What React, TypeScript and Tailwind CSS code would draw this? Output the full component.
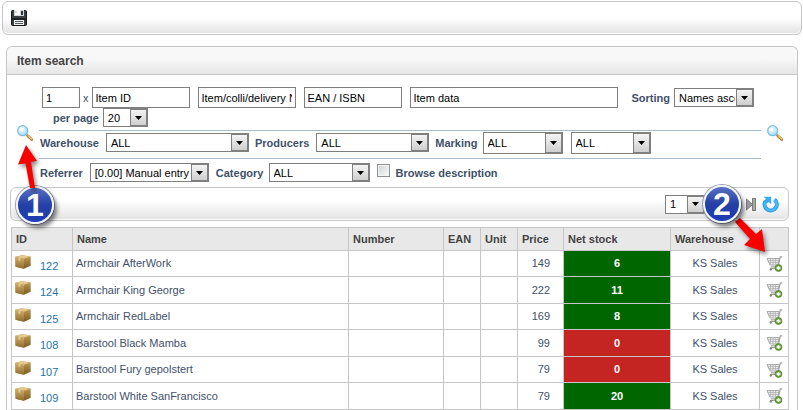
import { useId, type ReactNode } from "react";

const BORDER = "border-[#c6c6c6]";

function Select({ value, label, width, height = "h-[19px]" }: { value: string; label: string; width: string; height?: string }) {
  return (
    <span className={`relative inline-flex shrink-0 ${width} ${height}`}>
      <select
        aria-label={label}
        defaultValue={value}
        className="h-full w-full appearance-none rounded-none border border-[#7f7f7f] bg-white pr-[18px] pl-1 text-[11px] leading-4 text-black outline-none"
      >
        <option>{value}</option>
      </select>
      <span className="pointer-events-none absolute inset-y-0 right-0 flex w-[18px] items-center justify-center border-2 border-l border-[#808080] bg-linear-to-b from-[#f4f4f4] to-[#cfcfcf]">
        <svg width="7" height="4" viewBox="0 0 7 4" aria-hidden="true">
          <path d="M0 0h7L3.500 4z" fill="#000" />
        </svg>
      </span>
    </span>
  );
}

function TextBox({ value, label, width }: { value: string; label: string; width: string }) {
  return (
    <input
      type="text"
      aria-label={label}
      defaultValue={value}
      className={`h-[21px] shrink-0 border border-[#7f7f7f] bg-white px-[3px] text-[11px] leading-4 text-black outline-none ${width}`}
    />
  );
}

function Field({ label, gap = "gap-1", children }: { label: string; gap?: string; children: ReactNode }) {
  return (
    <div className={`flex items-center whitespace-nowrap ${gap}`}>
      <span className="font-bold">{label}</span>
      {children}
    </div>
  );
}

function SaveIcon() {
  return (
    <svg width="16" height="16" viewBox="0 0 16 16" aria-hidden="true">
      <path d="M.5 1.500a1 1 0 0 1 1-1h13a1 1 0 0 1 1 1v13a1 1 0 0 1-1 1h-13a1 1 0 0 1-1-1z" fill="#3a3f42" stroke="#17191b" />
      <rect x="3" y="0" width="10" height="6" fill="#d2d5d6" />
      <rect x="4" y="0" width="5" height="5" fill="#fafafa" />
      <path d="M5 1v2" stroke="#aaa" />
      <rect x="10" y="1" width="2" height="4" fill="#30363a" />
      <rect x="1" y="8" width="14" height="2" fill="#1d2022" />
      <rect x="3" y="10" width="10" height="5" fill="#f0f1f1" />
      <path d="M4 11.500h8M4 13.500h8" stroke="#55595c" />
    </svg>
  );
}

function SearchIcon() {
  const id = useId();
  return (
    <svg width="16" height="16" viewBox="0 0 16 16" aria-hidden="true">
      <defs>
        <radialGradient id={id} cx="40%" cy="35%" r="65%">
          <stop offset="0" stopColor="#fff" />
          <stop offset="1" stopColor="#9fdcf8" />
        </radialGradient>
      </defs>
      <path d="M9.500 9.500l1.500 1.500" stroke="#8b969e" strokeWidth="2" />
      <path d="M11 11l3.700 3.500" stroke="#b07a2e" strokeWidth="2.800" strokeLinecap="round" />
      <path d="M11.300 10.800l3.300 3.200" stroke="#eec07c" strokeWidth="1.400" strokeLinecap="round" />
      <circle cx="5.700" cy="5.700" r="5" fill={`url(#${id})`} stroke="#7dbbe0" strokeWidth="1.200" />
      <path d="M3 6a3 3 0 0 1 3-3" stroke="#fff" strokeWidth="1.200" fill="none" />
    </svg>
  );
}

function BoxIcon() {
  const id = useId();
  return (
    <svg width="16" height="14" viewBox="0 0 16 14" aria-hidden="true">
      <defs>
        <linearGradient id={`${id}l`} x1="0" y1="0" x2="0" y2="1">
          <stop offset="0" stopColor="#d3b16b" />
          <stop offset="1" stopColor="#8f6c2c" />
        </linearGradient>
        <linearGradient id={`${id}r`} x1="0" y1="0" x2="0" y2="1">
          <stop offset="0" stopColor="#c39e58" />
          <stop offset="1" stopColor="#7a5a20" />
        </linearGradient>
      </defs>
      <path d="M.3 1.800L7 .2l8.700 1.200v9.400L9 13.800.6 11.800z" fill={`url(#${id}r)`} />
      <path d="M.3 1.800L9 3.800v10L.6 11.800z" fill={`url(#${id}l)`} />
      <path d="M.3 1.800L7 .2l8.700 1.200L9 3.800z" fill="#dfc283" />
      <path d="M3.500 2.600L10 .7l1.800.3-6.400 2z" fill="#e9d3a0" />
      <path d="M3.500 2.600l1.900.4v2.800l-1.900-.4z" fill="#e2ca92" />
    </svg>
  );
}

function CartIcon() {
  return (
    <svg width="17" height="16" viewBox="0 0 17 16" aria-hidden="true">
      <path d="M1 2.500h12.200l-1.400 6.500H4z" fill="#e9e9e9" stroke="#ababab" />
      <path d="M1.500 4.500h11M2.500 6.500h9.500M4.500 3v5.500M7 3v5.500M9.500 3v5.500" stroke="#b4b4b4" strokeWidth=".8" />
      <path d="M16.300.8h-2l-2.300 10H4.800M4 12.500h7" stroke="#a0a0a0" strokeWidth="1.200" fill="none" />
      <circle cx="4.800" cy="13.500" r="1.200" fill="#888" />
      <circle cx="12.500" cy="12" r="3.400" fill="#6aa83a" stroke="#4b8322" strokeWidth=".8" />
      <path d="M12.500 10v4M10.500 12h4" stroke="#fff" strokeWidth="1.500" />
    </svg>
  );
}

function LastPageIcon() {
  return (
    <svg width="10" height="13" viewBox="0 0 10 13" aria-hidden="true">
      <path d="M.5 1l6 5.500-6 5.500z" fill="#9a9a9a" stroke="#7b7b7b" />
      <rect x="6.500" y=".5" width="3" height="12" fill="#a8a8a8" stroke="#7b7b7b" />
    </svg>
  );
}

function ReloadIcon() {
  return (
    <svg width="17" height="17" viewBox="0 0 17 17" aria-hidden="true">
      <path d="M12.500 3.600A6.100 6.100 0 1 1 3.600 5" fill="none" stroke="#1d8fe0" strokeWidth="4" />
      <path d="M12.500 3.800A6 6 0 1 1 3.800 5.200" fill="none" stroke="#43b8fa" strokeWidth="2.600" />
      <path d="M1.800.8h7.400v7.400L6.800 6 4.500 7.500 2 5l1.800-2z" fill="#37abf3" />
    </svg>
  );
}

function Badge({ value }: { value: string }) {
  return (
    <span className="flex size-[38px] items-center justify-center rounded-full border-2 border-[#f1f3f8] bg-linear-to-b from-[#5870c4] via-[#2540a4] to-[#1b3cb4] text-[32px] leading-8 font-black text-white shadow-[3px_4px_4px_rgba(0,0,0,0.5),0_0_0_1px_#9aa0b0]">
      {value}
    </span>
  );
}

const headings = ["ID", "Name", "Number", "EAN", "Unit", "Price", "Net stock", "Warehouse", ""];

const items = [
  { id: 122, name: "Armchair AfterWork", price: 149, stock: 6 },
  { id: 124, name: "Armchair King George", price: 222, stock: 11 },
  { id: 125, name: "Armchair RedLabel", price: 169, stock: 8 },
  { id: 108, name: "Barstool Black Mamba", price: 99, stock: 0 },
  { id: 107, name: "Barstool Fury gepolstert", price: 79, stock: 0 },
  { id: 109, name: "Barstool White SanFrancisco", price: 79, stock: 20 },
];

function ItemTable() {
  return (
    <table className="w-full table-fixed border-collapse">
      <colgroup>
        <col className="w-[61px]" />
        <col />
        <col className="w-[95px]" />
        <col className="w-[37px]" />
        <col className="w-[37px]" />
        <col className="w-[46px]" />
        <col className="w-[107px]" />
        <col className="w-[89px]" />
        <col className="w-[29px]" />
      </colgroup>
      <thead>
        <tr className="h-[23px] bg-[#e8e8e8] text-left text-[#444]">
          {headings.map((h) => (
            <th key={h} className={`border px-1 pb-px font-bold ${BORDER}`}>{h}</th>
          ))}
        </tr>
      </thead>
      <tbody>
        {items.map((item) => (
          <tr key={item.id} className="odd:h-[26px] even:h-[27px]">
            <td className={`border px-[3px] ${BORDER}`}>
              <div className="flex h-[18px] items-start gap-[9px]">
                <BoxIcon />
                <a href="#item" className="self-end text-[#1f73a6]">{item.id}</a>
              </div>
            </td>
            <td className={`border px-[3px] pb-px ${BORDER}`}>{item.name}</td>
            <td className={`border ${BORDER}`} />
            <td className={`border ${BORDER}`} />
            <td className={`border ${BORDER}`} />
            <td className={`border pr-[13px] pb-px text-right ${BORDER}`}>{item.price}</td>
            <td className={`border pb-px text-center font-bold text-white ${BORDER} ${item.stock > 0 ? "bg-[#006600]" : "bg-[#c42522]"}`}>
              {item.stock}
            </td>
            <td className={`border pb-px text-center ${BORDER}`}>KS Sales</td>
            <td className={`border ${BORDER}`}>
              <button type="button" aria-label="Add to cart" className="mx-auto block">
                <CartIcon />
              </button>
            </td>
          </tr>
        ))}
      </tbody>
    </table>
  );
}

function SearchForm() {
  return (
    <form className="flex items-center gap-[6px] pt-3 pr-[14px] pb-px pl-[10px]">
      <button type="button" aria-label="Search" className="mb-2"><SearchIcon /></button>
      <div className="flex min-w-0 grow flex-col">
        <div className="flex items-center gap-2 pl-[3px]">
          <div className="flex items-center gap-[3px]">
            <TextBox label="Quantity" value="1" width="w-[38px]" />
            <span>x</span>
            <TextBox label="Item ID" value="Item ID" width="w-[98px]" />
          </div>
          <TextBox label="Item number" value="Item/colli/delivery Number" width="w-[98px]" />
          <TextBox label="EAN / ISBN" value="EAN / ISBN" width="w-[98px]" />
          <TextBox label="Item data" value="Item data" width="w-[208px]" />
          <div className="pl-1.5">
            <Field label="Sorting"><Select label="Sorting" value="Names ascending" width="w-20" /></Field>
          </div>
        </div>
        <div className="flex pb-[3px] pl-3.5">
          <Field label="per page"><Select label="Items per page" value="20" width="w-[45px]" /></Field>
        </div>
        <div className="flex h-7 items-center gap-[6px] border-t border-[#a9bccb] pb-1 pl-px">
          <Field label="Warehouse" gap="gap-[7px]"><Select label="Warehouse" value="ALL" width="w-[143px]" /></Field>
          <Field label="Producers" gap="gap-[7px]"><Select label="Producers" value="ALL" width="w-[113px]" /></Field>
          <Field label="Marking" gap="gap-[5px]">
            <span className="flex gap-2">
              <Select label="Marking 1" value="ALL" width="w-20" height="h-[22px]" />
              <Select label="Marking 2" value="ALL" width="w-20" height="h-[22px]" />
            </span>
          </Field>
        </div>
        <div className="flex h-7 items-center gap-[7px] border-t border-[#a9bccb] pl-px">
          <Field label="Referrer" gap="gap-[7px]"><Select label="Referrer" value="[0.00] Manual entry" width="w-[119px]" /></Field>
          <Field label="Category" gap="gap-[5px]"><Select label="Category" value="ALL" width="w-[101px]" /></Field>
          <label className="flex items-center gap-1.5 font-bold">
            <input type="checkbox" className="mb-1 size-[13px] appearance-none border border-[#8e8f8f] bg-linear-to-br from-[#cfd3d8] to-[#fafafa] shadow-[inset_0_0_0_1px_#f4f4f4]" />
            Browse description
          </label>
        </div>
      </div>
      <button type="button" aria-label="Search items" className="mb-2"><SearchIcon /></button>
    </form>
  );
}

export default function App() {
  return (
    <div className="bg-white pt-px pr-px pl-0.5 font-['Liberation_Sans',Arial,sans-serif] text-[11px] leading-[14px] text-[#3f5169]">
      <div className={`flex h-[34px] items-center rounded-md border bg-linear-to-b from-white from-50% to-[#e2e2e2] px-2 shadow-[inset_0_-1px_0_#fff] ${BORDER}`}>
        <button type="button" aria-label="Save"><SaveIcon /></button>
      </div>

      <section className={`relative mt-[11px] mr-1 ml-1 rounded-t-md border border-b-0 ${BORDER}`}>
        <h1 className={`flex h-7 items-center rounded-t-md border-b bg-linear-to-b from-[#f8f8f8] from-40% to-[#e6e6e6] px-2.5 text-[12px] font-bold text-[#444] ${BORDER}`}>
          Item search
        </h1>

        <SearchForm />

        <div className="pr-2 pl-[4px]">
          <div className={`mb-1.5 -ml-px flex h-[34px] items-center justify-end rounded-md border bg-linear-to-b from-white from-40% to-[#e2e2e2] pr-[9px] shadow-[inset_0_-1px_0_#fff] ${BORDER}`}>
            <Select label="Page" value="1" width="w-10" />
            <button type="button" aria-label="Last page" className="ml-[41px]"><LastPageIcon /></button>
            <button type="button" aria-label="Reload" className="ml-[6px]"><ReloadIcon /></button>
          </div>
          <ItemTable />
        </div>

        {/* Step 1: start the search */}
        <div className="pointer-events-none absolute top-[97px] left-[9px] flex flex-col items-start">
          <svg width="30" height="44" viewBox="0 0 30 44" className="drop-shadow-[2px_3px_2px_rgba(0,0,0,0.45)]" aria-hidden="true">
            <path d="M10 1l11 16-6 1 4 26h-5L9.500 19.500 2 20.500z" fill="#f80000" />
          </svg>
          <div className="-mt-0.5"><Badge value="1" /></div>
        </div>

        {/* Step 2: add the item to the cart */}
        <div className="pointer-events-none absolute top-[138px] right-[26px] h-[72px] w-[68px]">
          <svg width="68" height="72" viewBox="0 0 68 72" className="absolute drop-shadow-[2px_3px_2px_rgba(0,0,0,0.45)]" aria-hidden="true">
            <path d="M37 33l16 16 6-5 3 23-21-7 6-6-15-17z" fill="#f80000" />
          </svg>
          <div className="relative"><Badge value="2" /></div>
        </div>
      </section>
    </div>
  );
}
